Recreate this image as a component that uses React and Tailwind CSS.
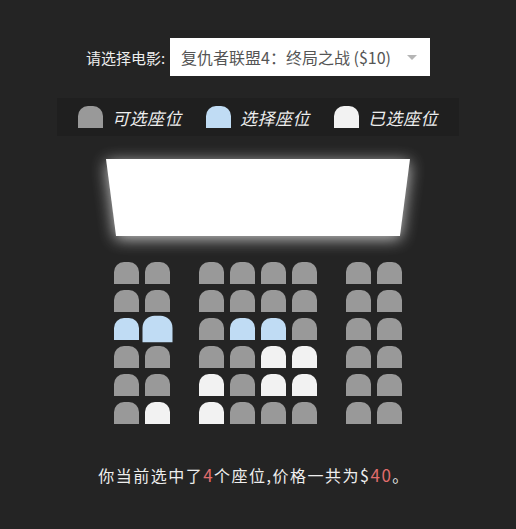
import React from "react";

// g = free, s = selected, o = occupied, h = selected + hovered
const rows = [
  "gggggggg",
  "gggggggg",
  "shgssggg",
  "ggggoogg",
  "ggogoogg",
  "googgggg",
];

const seatColor = {
  g: "bg-[#999999]",
  s: "bg-[#c0dcf4]",
  h: "bg-[#c0dcf4] scale-[1.2]",
  o: "bg-[#f2f2f2]",
};

const font = "font-['Noto_Sans_CJK_SC','Noto_Sans',sans-serif]";

function Seat({ state, className = "" }) {
  return (
    <div
      className={`w-[25px] h-[22px] rounded-t-[10px] ${seatColor[state]} ${className}`}
    />
  );
}

export default function App() {
  return (
    <div
      className={`min-h-screen bg-[#242424] flex flex-col items-center pt-[38px] text-[#eeeeee] ${font}`}
    >
      {/* movie picker */}
      <div className="flex items-center">
        <label className="text-[15px] leading-none">请选择电影:</label>
        <div className="ml-[5px] w-[260px] h-[38px] bg-white flex items-center pl-[11px] pr-[13px]">
          <span className="flex-1 text-[16px] text-[#555555] leading-none whitespace-nowrap">
            复仇者联盟4：终局之战 ($10)
          </span>
          <svg width="10" height="5" viewBox="0 0 10 5">
            <path d="M0 0 L10 0 L5 5 Z" fill="#b5b5b5" />
          </svg>
        </div>
      </div>

      {/* legend */}
      <ul className="mt-[22px] w-[402px] h-[38px] bg-[#1f1f1f] flex items-center justify-center gap-[24px]">
        {[
          ["g", "可选座位"],
          ["s", "选择座位"],
          ["o", "已选座位"],
        ].map(([st, label]) => (
          <li key={label} className="flex items-center">
            <Seat state={st} />
            <small className="ml-[9px] text-[17px] tracking-[0.5px] italic leading-none">
              {label}
            </small>
          </li>
        ))}
      </ul>

      {/* screen */}
      <div className="mt-[23px] [filter:drop-shadow(0_3px_8px_rgba(255,255,255,0.75))]">
        <div className="w-[304px] h-[77px] bg-white [clip-path:polygon(0_0,100%_0,96.7%_100%,3.3%_100%)]" />
      </div>

      {/* seats */}
      <div className="mt-[23px] flex flex-col">
        {rows.map((row, r) => (
          <div key={r} className="flex">
            {row.split("").map((st, c) => (
              <Seat
                key={c}
                state={st}
                className={`m-[3px] ${c === 1 || c === 5 ? "mr-[26px]" : ""}`}
              />
            ))}
          </div>
        ))}
      </div>

      <p className="mt-[36px] text-[16px] tracking-[1.5px] leading-[24px] pr-[8px]">
        你当前选中了<span className="text-[#e06c6c] text-[17px]">4</span>
        个座位,价格一共为$<span className="text-[#e06c6c] text-[17px]">40</span>。
      </p>
    </div>
  );
}
